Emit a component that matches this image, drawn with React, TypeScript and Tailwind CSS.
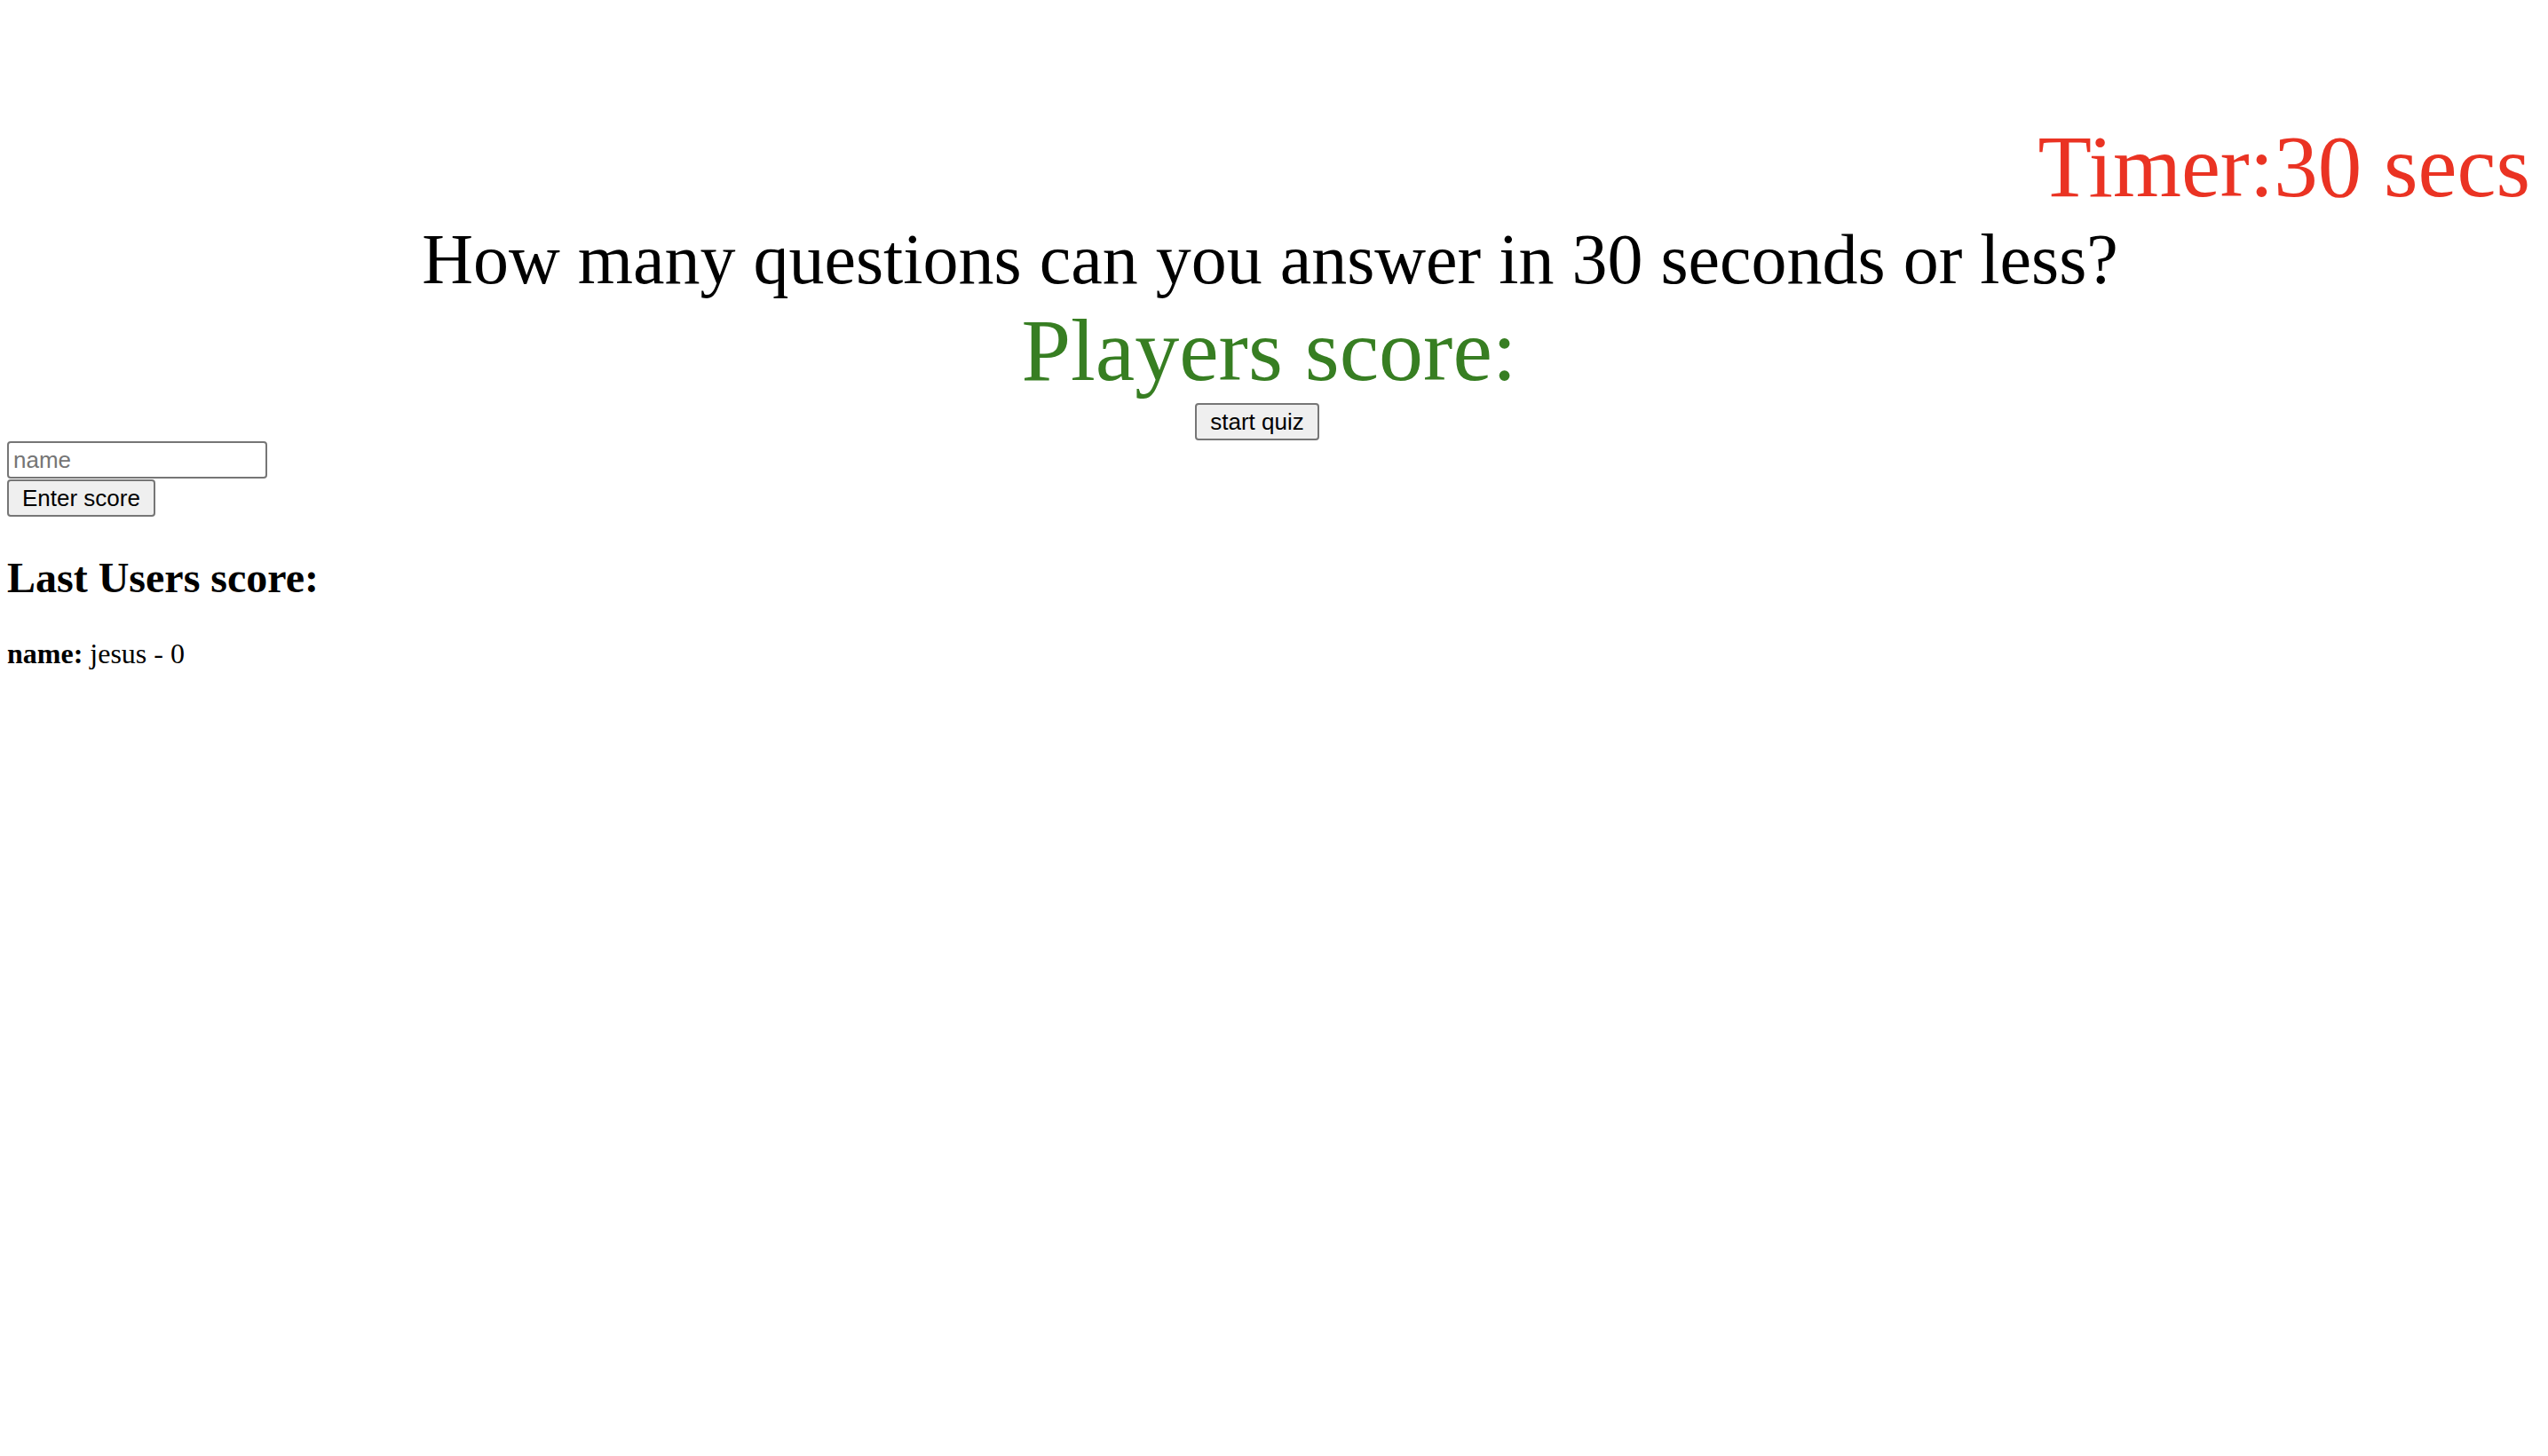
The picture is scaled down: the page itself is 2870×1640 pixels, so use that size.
import React from 'react';

const btn =
  "block h-[42px] rounded-[4px] border-2 border-[#767676] bg-[#efefef] px-[15px] font-['Liberation_Sans',Arial,sans-serif] text-[26px] leading-[30px] text-black";

export default function App() {
  return (
    <div className="min-h-screen bg-white pl-[8px] pr-[23px] font-['Liberation_Serif','Times_New_Roman',serif] text-black">
      <div className="-mr-[3px] pt-[138px] text-right text-[99px] leading-none text-[#ea3323]">Timer:30 secs</div>
      <h1 className="mt-[15px] pl-[6px] text-center text-[80px] font-normal leading-none">
        How many questions can you answer in 30 seconds or less?
      </h1>
      <h2 className="mt-[13px] pl-[4px] text-center text-[100px] font-normal leading-none text-[#377e22]">
        Players score:
      </h2>
      <div className="mt-[9px] flex justify-center">
        <button className={btn + ' mr-[23px]'}>start quiz</button>
      </div>
      <div className="mt-[1px]">
        <input
          placeholder="name"
          className="block h-[42px] w-[293px] rounded-[4px] border-2 border-[#767676] bg-white px-[5px] font-['Liberation_Sans',Arial,sans-serif] text-[26px] text-black placeholder:text-[#757575]"
        />
      </div>
      <div className="mt-[1px]">
        <button className={btn}>Enter score</button>
      </div>
      <h3 className="mt-[45px] text-[48px] font-bold leading-none">Last Users score:</h3>
      <p className="mt-[45px] text-[32px] leading-none">
        <b>name:</b> jesus - 0
      </p>
    </div>
  );
}
